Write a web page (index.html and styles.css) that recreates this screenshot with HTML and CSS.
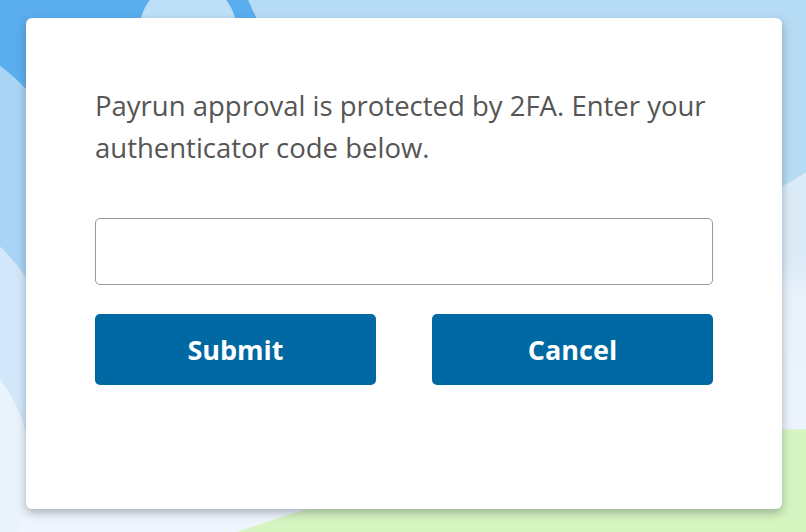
FILE: index.html
```html
<!DOCTYPE html>
<html lang="en">
<head>
<meta charset="UTF-8">
<meta name="viewport" content="width=device-width, initial-scale=1.0">
<title>Payrun approval</title>
<link rel="stylesheet" href="styles.css">
</head>
<body>
<div class="twofa-card">
    <p class="twofa-text">Payrun approval is protected by 2FA. Enter your authenticator code below.</p>
    <input type="text" class="twofa-input" id="code" name="code" autocomplete="one-time-code">
    <div class="twofa-actions">
        <button class="twofa-btn" id="submit">Submit</button>
        <button class="twofa-btn" id="cancel">Cancel</button>
    </div>
</div>
</body>
</html>
```

FILE: styles.css
```css
html, body {
    margin: 0;
    height: 100%;
}

body {
    box-sizing: border-box;
    padding: 18px 24px 23px 26px;
    font-family: "Open Sans", "Liberation Sans", sans-serif;
    background-color: #eef5fd;
    /* soft clouds behind the dialog */
    background-image:
        radial-gradient(circle at 850px 2295px, #d6f5c0 0, #d6f5c0 1866px, transparent 1867px),
        radial-gradient(circle at 188px 30px, #bde0f8 0, #bde0f8 48px, transparent 49px),
        radial-gradient(circle at 600px -150px, #b6dbf5 0, #b6dbf5 382px, transparent 383px),
        radial-gradient(circle at -120px 470px, #eaf3fc 0, #eaf3fc 150px, transparent 151px),
        radial-gradient(circle at -140px 390px, #d2e7f9 0, #d2e7f9 200px, transparent 201px),
        radial-gradient(circle at -150px 260px, #aad4f5 0, #aad4f5 245px, transparent 246px),
        linear-gradient(180deg, #5aaeee 0, #5aaeee 140px, #dcebf8 170px, #dcebf8 260px, #e9f2fb 300px, #eef5fd 100%);
    overflow: hidden;
}

.twofa-card {
    box-sizing: border-box;
    width: 756px;
    height: 491px;
    padding: 67px 69px 0 69px;
    background: #fff;
    border-radius: 6px;
    box-shadow: 0 4px 10px rgba(60, 70, 80, 0.38);
}

.twofa-text {
    margin: 0 0 49px 0;
    font-size: 27.5px;
    line-height: 42px;
    color: #555;
}

.twofa-input {
    display: block;
    box-sizing: border-box;
    width: 100%;
    height: 67px;
    margin: 0;
    padding: 0 16px;
    border: 1px solid #999;
    border-radius: 5px;
    font-family: inherit;
    font-size: 24px;
    outline: none;
}

.twofa-actions {
    display: flex;
    justify-content: space-between;
    margin-top: 29px;
}

.twofa-btn {
    width: 281px;
    height: 71px;
    background-color: #0068a3;
    color: #fff;
    border: none;
    border-radius: 5px;
    font-family: inherit;
    font-size: 27px;
    font-weight: 700;
    cursor: pointer;
}
```
